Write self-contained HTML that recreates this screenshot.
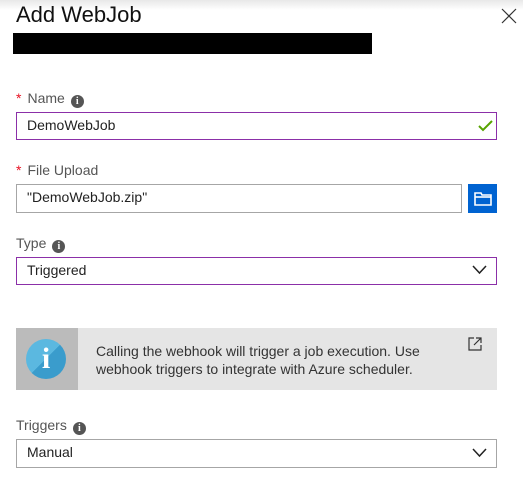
<!DOCTYPE html><html><head><style>
body{margin:0;width:523px;height:494px;background:#fff;font-family:"Liberation Sans",sans-serif;position:relative;overflow:hidden;color:#222}
.a{position:absolute}
.lbl{font-size:14px;color:#555}
.star{color:#e81123;margin-right:6px}
.info{display:inline-block;width:13px;height:13px;border-radius:50%;background:#555;color:#fff;font-size:10px;font-weight:bold;text-align:center;line-height:13px;font-family:"Liberation Serif",serif;vertical-align:-1px;margin-left:6px}
.box{position:absolute;box-sizing:border-box;font-size:14px;padding-left:10px;line-height:25px}
</style></head><body>
<div class="a" style="left:0;top:0;width:523px;height:10px;background:linear-gradient(#e8e8e8,#fff)"></div>
<div class="a" style="left:16px;top:2px;font-size:22px;color:#111">Add WebJob</div>
<svg class="a" style="left:501px;top:8px" width="16" height="16"><path d="M1 1L15 15M15 1L1 15" stroke="#333" stroke-width="1.2"/></svg>
<div class="a" style="left:13px;top:33px;width:359px;height:21px;background:#000"></div>
<div class="a lbl" style="left:16px;top:90px"><span class="star">*</span>Name<span class="info">i</span></div>
<div class="box" style="left:16px;top:112px;width:481px;height:28px;border:1px solid #8b2fa8">DemoWebJob</div>
<svg class="a" style="left:478px;top:119px" width="15" height="14"><path d="M1 7L5 11L14 2" stroke="#57a300" stroke-width="2" fill="none"/></svg>
<div class="a lbl" style="left:16px;top:162px"><span class="star">*</span>File Upload</div>
<div class="box" style="left:16px;top:184px;width:446px;height:29px;border:1px solid #a6a6a6">"DemoWebJob.zip"</div>
<div class="a" style="left:468px;top:184px;width:29px;height:29px;background:#0063d1"></div>
<svg class="a" style="left:474px;top:191px" width="18" height="15"><path d="M1 2H7L8 4H17V14H1Z" fill="none" stroke="#fff" stroke-width="1.6"/><path d="M1 6H17" stroke="#fff" stroke-width="1.6"/></svg>
<div class="a lbl" style="left:16px;top:235px">Type<span class="info">i</span></div>
<div class="box" style="left:16px;top:257px;width:481px;height:28px;border:1px solid #8b2fa8">Triggered</div>
<svg class="a" style="left:472px;top:265px" width="15" height="10"><path d="M1 1L7.5 8L14 1" stroke="#222" stroke-width="1.5" fill="none"/></svg>
<div class="a" style="left:16px;top:328px;width:62px;height:62px;background:#bbb"></div>
<div class="a" style="left:78px;top:328px;width:419px;height:62px;background:#e5e5e5"></div>
<div class="a" style="left:26px;top:339px;width:40px;height:40px;border-radius:50%;background:linear-gradient(135deg,#5bb8e0 50%,#3a9ccc 50%)"></div>
<div class="a" style="left:26px;top:339px;width:40px;text-align:center;font:bold 30px/40px 'Liberation Serif',serif;color:#fff">i</div>
<div class="a" style="left:96px;top:342px;font-size:14px;line-height:18px;color:#333">Calling the webhook will trigger a job execution. Use<br>webhook triggers to integrate with Azure scheduler.</div>
<svg class="a" style="left:468px;top:337px" width="14" height="14"><path d="M6 1H1V13H13V8M8 1H13V6M13 1L6 8" stroke="#333" stroke-width="1.2" fill="none"/></svg>
<div class="a lbl" style="left:16px;top:417px">Triggers<span class="info">i</span></div>
<div class="box" style="left:16px;top:439px;width:481px;height:29px;border:1px solid #a6a6a6">Manual</div>
<svg class="a" style="left:472px;top:448px" width="15" height="10"><path d="M1 1L7.5 8L14 1" stroke="#222" stroke-width="1.5" fill="none"/></svg>
</body></html>
